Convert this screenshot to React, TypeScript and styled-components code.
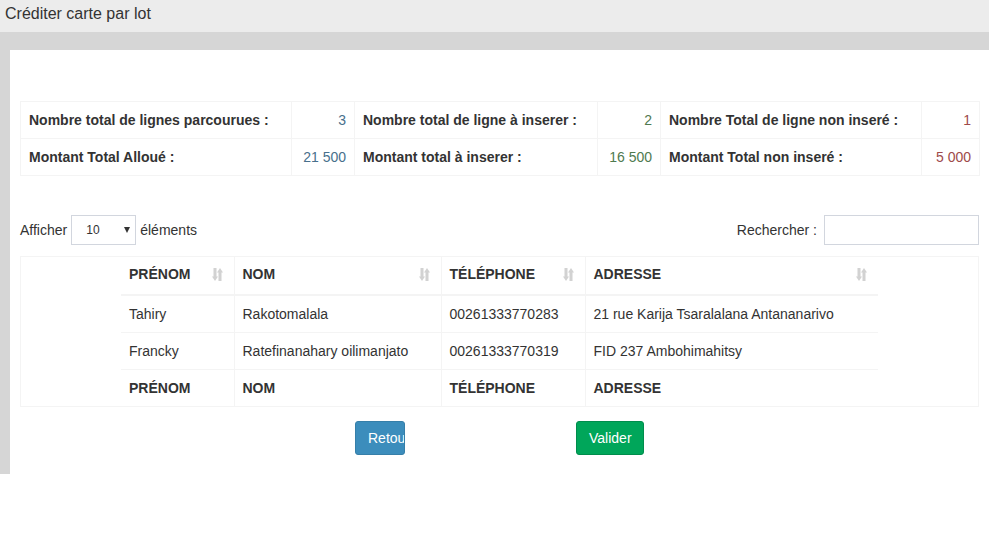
import React from "react";
import styled, { createGlobalStyle } from "styled-components";

const GlobalStyle = createGlobalStyle`
  html, body { margin: 0; padding: 0; background: #ffffff; }
  body {
    font-family: "Liberation Sans", Arial, sans-serif;
    font-size: 14px;
    line-height: 20px;
    color: #333333;
  }
  * { box-sizing: border-box; }
`;

const TitleBar = styled.div`
  height: 32px;
  background: #ececec;
  padding-left: 5px;
  font-size: 16px;
  line-height: 28px;
  color: #333;
`;

const Backdrop = styled.div`
  background: #d6d6d6;
  padding: 18px 0 0 10px;
`;

const Panel = styled.div`
  background: #ffffff;
  padding: 51px 10px 19px 10px;
`;

const SummaryTable = styled.table`
  width: 100%;
  border-collapse: collapse;
  table-layout: fixed;
  border: 1px solid #f4f4f4;
`;

const SumLabel = styled.td`
  border: 1px solid #f4f4f4;
  padding: 8px;
  font-weight: bold;
  color: #333;
  white-space: nowrap;
`;

const SumValue = styled.td<{ $tone: "info" | "success" | "danger" }>`
  border: 1px solid #f4f4f4;
  padding: 8px;
  text-align: right;
  white-space: nowrap;
  color: ${(p) =>
    p.$tone === "info" ? "#48708c" : p.$tone === "success" ? "#4f7a4f" : "#9e4a4a"};
`;

const Controls = styled.div`
  margin-top: 39px;
  display: flex;
  justify-content: space-between;
  align-items: center;
  height: 30px;
`;

const LengthGroup = styled.label`
  display: flex;
  align-items: center;
  gap: 4px;
`;

const SelectWrap = styled.span`
  position: relative;
  display: inline-block;
  width: 65px;
  height: 30px;
`;

const Select = styled.select`
  appearance: none;
  -webkit-appearance: none;
  width: 65px;
  height: 30px;
  border: 1px solid #d2d6de;
  background: #fff;
  font-family: "Liberation Sans", Arial, sans-serif;
  font-size: 12px;
  color: #333;
  padding: 0 0 0 14px;
  border-radius: 0;
  outline: none;
`;

const Caret = styled.span`
  position: absolute;
  right: 6px;
  top: 12px;
  width: 0;
  height: 0;
  border-left: 3.5px solid transparent;
  border-right: 3.5px solid transparent;
  border-top: 6px solid #333;
  pointer-events: none;
`;

const SearchGroup = styled.label`
  display: flex;
  align-items: center;
  gap: 7px;
`;

const SearchInput = styled.input`
  width: 155px;
  height: 30px;
  border: 1px solid #d2d6de;
  outline: none;
  padding: 0 6px;
  font-family: "Liberation Sans", Arial, sans-serif;
  font-size: 14px;
`;

const DataBox = styled.div`
  margin-top: 11px;
  border: 1px solid #f4f4f4;
  display: flex;
  justify-content: center;
`;

const DataTable = styled.table`
  width: 757px;
  border-collapse: collapse;
  table-layout: fixed;
`;

const HeadCell = styled.th`
  position: relative;
  padding: 7px 30px 10px 8px;
  text-align: left;
  font-weight: bold;
  text-transform: uppercase;
  border-bottom: 2px solid #f4f4f4;
  white-space: nowrap;
  & + & { border-left: 1px solid #f4f4f4; }
`;

const FootCell = styled.th`
  padding: 8px;
  text-align: left;
  font-weight: bold;
  text-transform: uppercase;
  border-top: 1px solid #f4f4f4;
  white-space: nowrap;
  & + & { border-left: 1px solid #f4f4f4; }
`;

const BodyRow = styled.tr`
  border-top: 1px solid #f4f4f4;
`;

const Cell = styled.td`
  padding: 8px;
  white-space: nowrap;
  & + & { border-left: 1px solid #f4f4f4; }
`;

const SortIcon = styled.svg`
  position: absolute;
  right: 11px;
  top: 10px;
`;

const Actions = styled.div`
  margin-top: 14px;
  display: flex;
  padding-left: 335px;
  gap: 171px;
`;

const Button = styled.button<{ $variant: "primary" | "success"; $w: number }>`
  width: ${(p) => p.$w}px;
  height: 34px;
  padding: 6px 12px;
  border-radius: 3px;
  border: 1px solid ${(p) => (p.$variant === "primary" ? "#367fa9" : "#008d4c")};
  background: ${(p) => (p.$variant === "primary" ? "#3c8dbc" : "#00a65a")};
  color: #fff;
  font-family: "Liberation Sans", Arial, sans-serif;
  font-size: 14px;
  line-height: 20px;
  text-align: left;
  overflow: hidden;
  white-space: nowrap;
  cursor: pointer;
`;

const Sort = () => (
  <SortIcon width="11" height="15" viewBox="0 0 11 15">
    <g fill="#d2d2d2">
      <rect x="1.5" y="1" width="3" height="9" />
      <polygon points="0,9.5 6,9.5 3,14" />
      <rect x="6.5" y="5" width="3" height="9" />
      <polygon points="5,5.5 11,5.5 8,1" />
    </g>
  </SortIcon>
);

const rows = [
  ["Tahiry", "Rakotomalala", "00261333770283", "21 rue Karija Tsaralalana Antananarivo"],
  ["Francky", "Ratefinanahary oilimanjato", "00261333770319", "FID 237 Ambohimahitsy"],
];

const cols = ["Prénom", "Nom", "Téléphone", "Adresse"];
const widths = [113, 207, 144, 293];

export default function App() {
  return (
    <>
      <GlobalStyle />
      <TitleBar>Créditer carte par lot</TitleBar>
      <Backdrop>
        <Panel>
          <SummaryTable>
            <colgroup>
              <col style={{ width: 271 }} />
              <col style={{ width: 63 }} />
              <col style={{ width: 243 }} />
              <col style={{ width: 63 }} />
              <col style={{ width: 261 }} />
              <col style={{ width: 58 }} />
            </colgroup>
            <tbody>
              <tr>
                <SumLabel>Nombre total de lignes parcourues :</SumLabel>
                <SumValue $tone="info">3</SumValue>
                <SumLabel>Nombre total de ligne à inserer :</SumLabel>
                <SumValue $tone="success">2</SumValue>
                <SumLabel>Nombre Total de ligne non inseré :</SumLabel>
                <SumValue $tone="danger">1</SumValue>
              </tr>
              <tr>
                <SumLabel>Montant Total Alloué :</SumLabel>
                <SumValue $tone="info">21 500</SumValue>
                <SumLabel>Montant total à inserer :</SumLabel>
                <SumValue $tone="success">16 500</SumValue>
                <SumLabel>Montant Total non inseré :</SumLabel>
                <SumValue $tone="danger">5 000</SumValue>
              </tr>
            </tbody>
          </SummaryTable>

          <Controls>
            <LengthGroup>
              Afficher
              <SelectWrap>
                <Select defaultValue="10">
                  <option value="10">10</option>
                  <option value="25">25</option>
                  <option value="50">50</option>
                  <option value="100">100</option>
                </Select>
                <Caret />
              </SelectWrap>
              éléments
            </LengthGroup>
            <SearchGroup>
              Rechercher :
              <SearchInput type="search" />
            </SearchGroup>
          </Controls>

          <DataBox>
            <DataTable>
              <colgroup>
                {widths.map((w, i) => (
                  <col key={i} style={{ width: w }} />
                ))}
              </colgroup>
              <thead>
                <tr>
                  {cols.map((c) => (
                    <HeadCell key={c}>
                      {c}
                      <Sort />
                    </HeadCell>
                  ))}
                </tr>
              </thead>
              <tbody>
                {rows.map((r, i) => (
                  <BodyRow key={i}>
                    {r.map((v, j) => (
                      <Cell key={j}>{v}</Cell>
                    ))}
                  </BodyRow>
                ))}
              </tbody>
              <tfoot>
                <tr>
                  {cols.map((c) => (
                    <FootCell key={c}>{c}</FootCell>
                  ))}
                </tr>
              </tfoot>
            </DataTable>
          </DataBox>

          <Actions>
            <Button $variant="primary" $w={50}>Retour</Button>
            <Button $variant="success" $w={68}>Valider</Button>
          </Actions>
        </Panel>
      </Backdrop>
    </>
  );
}
